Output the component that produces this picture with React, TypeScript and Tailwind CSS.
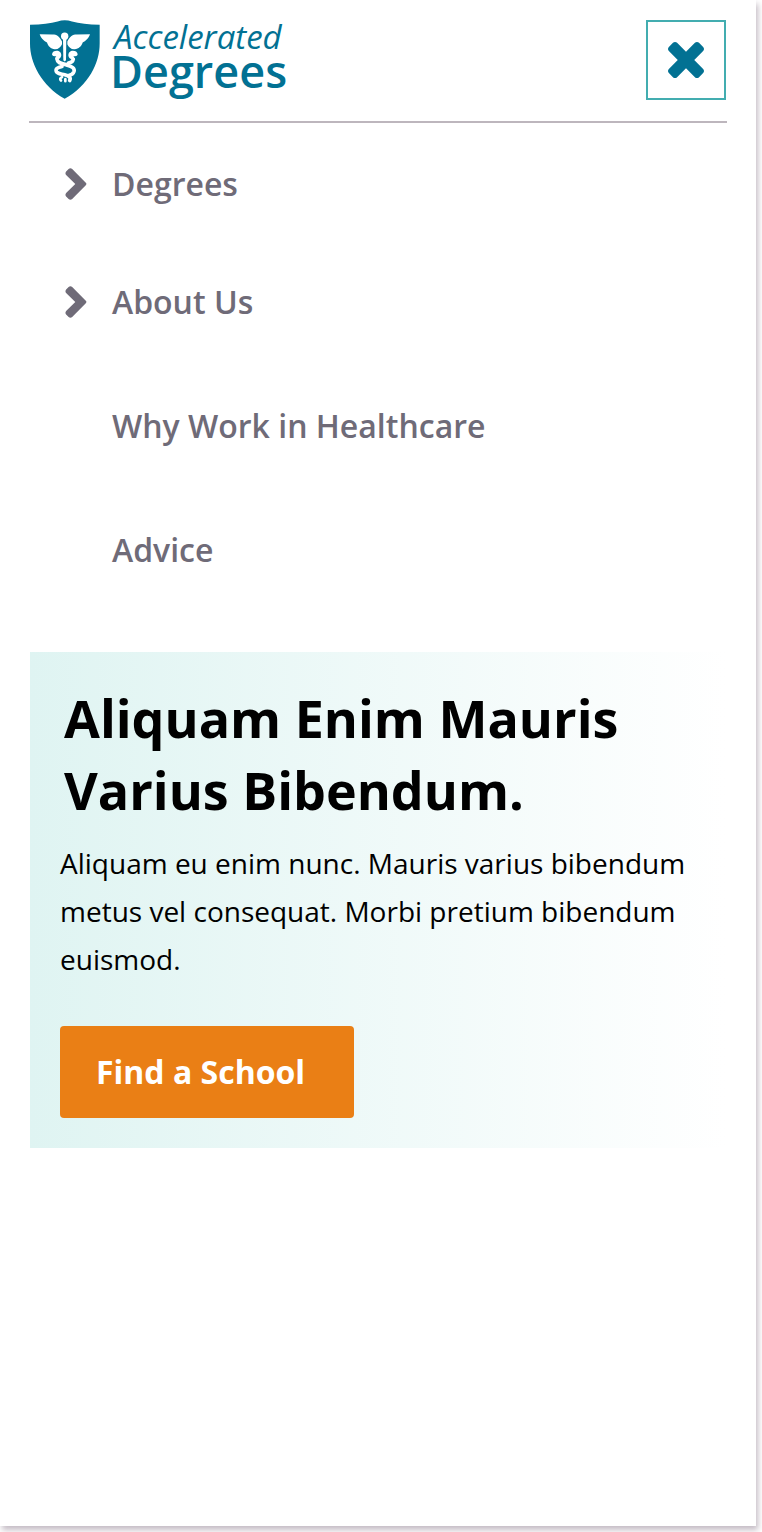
import React from "react";

function Shield() {
  return (
    <svg viewBox="30 30 210 236" className="h-[79px] w-[70px] shrink-0" aria-hidden="true">
      <path
        fill="#027193"
        d="M30 44 Q82 43 113 34 Q134 27 156 34 Q188 43 239 44 L239 100 C239 158 206 226 134 266 C64 226 30 158 30 100 Z"
      />
      <g fill="#fff">
        <circle cx="134" cy="78" r="11" />
        <path d="M129 84 H139 L138 150 L134 154 L130 150 Z" />
        <path d="M126 94 C118 78 110 73 98 73 L59 72 C64 87 75 93 81 97 C84 108 93 116 104 117 C114 118 122 111 126 102 Z" />
        <path d="M142 94 C150 78 158 73 170 73 L210 72 C205 87 194 93 188 97 C185 108 176 116 164 117 C154 118 146 111 142 102 Z" />
        <path d="M96 132 C97 123 108 120 117 123 C126 128 126 140 118 146 L108 148 C104 146 106 141 109 138 C102 138 96 137 96 132 Z" />
        <path d="M173 132 C172 123 161 120 152 123 C143 128 143 140 151 146 L161 148 C165 146 163 141 160 138 C167 138 173 137 173 132 Z" />
      </g>
      <g fill="none" stroke="#fff" strokeWidth="11" strokeLinecap="round">
        <path d="M111 147 C112 160 128 160 142 165 C156 169 165 174 162 184 C159 193 151 195 146 196" />
        <path d="M160 147 C158 156 152 158 145 159 M126 169 C112 172 106 176 109 184 C112 191 122 191 134 194 C146 197 154 202 149 211" />
        <path d="M126 201 C120 203 119 207 123 211 M136 207 V213" strokeWidth="8" />
      </g>
    </svg>
  );
}

function Chevron() {
  return (
    <svg viewBox="0 0 22 32" className="h-8 w-[22px] shrink-0" aria-hidden="true">
      <path
        fill="#6f6b78"
        d="M7.2 .9 L20.8 14.8 Q22 16 20.8 17.2 L7.2 31.1 Q5.4 32.6 3.6 31.1 L1.1 28.6 Q-.2 26.8 1.1 25 L10.3 16 L1.1 7 Q-.2 5.2 1.1 3.4 L3.6 .9 Q5.4 -.6 7.2 .9 Z"
      />
    </svg>
  );
}

export default function App() {
  return (
    <div className="flex min-h-screen overflow-hidden bg-white pr-[6px] pb-[6px] font-['Open_Sans','Noto_Sans',sans-serif]">
      <div className="flex-1 bg-white px-[30px] shadow-[2px_4px_6px_rgba(60,30,60,0.3)]">
        <header className="-mx-px flex items-start justify-between border-b-2 border-[#bdb6bd] px-px pt-5 pb-[21px]">
          <a href="#" className="flex text-[#027193]">
            <Shield />
            <span className="ml-[10px] flex flex-col">
              <span className="pl-1 text-[33px] leading-[34px] italic">Accelerated</span>
              <span className="text-[45px] leading-[34px] font-semibold">Degrees</span>
            </span>
          </a>
          <button
            type="button"
            aria-label="Close menu"
            className="flex size-20 items-center justify-center border-2 border-[#43adb0]"
          >
            <svg viewBox="110 366 1188 1188" className="size-9" aria-hidden="true">
              <path
                fill="#027193"
                d="M1298 1322q0 40-28 68l-136 136q-28 28-68 28t-68-28l-294-294-294 294q-28 28-68 28t-68-28l-136-136q-28-28-28-68t28-68l294-294-294-294q-28-28-28-68t28-68l136-136q28-28 68-28t68 28l294 294 294-294q28-28 68-28t68 28l136 136q28 28 28 68t-28 68l-294 294 294 294q28 28 28 68z"
              />
            </svg>
          </button>
        </header>

        <nav className="pt-0.5 text-[32px] leading-[44px] font-semibold text-[#6f6b78]">
          <ul>
            {["Degrees", "About Us"].map((label) => (
              <li key={label}>
                <button type="button" className="flex h-[118px] w-full items-center gap-[25px] pl-[35px] text-left">
                  <Chevron />
                  {label}
                </button>
              </li>
            ))}
          </ul>
          <ul className="pt-[3px]">
            {["Why Work in Healthcare", "Advice"].map((label) => (
              <li key={label}>
                <a href="#" className="flex h-[124px] items-center pl-[82px]">
                  {label}
                </a>
              </li>
            ))}
          </ul>
        </nav>

        <section className="mt-10 bg-[linear-gradient(to_right,#dff4f2,#ffffff)] p-[30px]">
          <h2 className="pl-1 text-[52px] leading-[72px] font-bold text-black">
            Aliquam Enim Mauris Varius Bibendum.
          </h2>
          <p className="mt-[13px] text-[28px] leading-[48px] text-black">
            Aliquam eu enim nunc. Mauris varius bibendum metus vel consequat. Morbi pretium bibendum euismod.
          </p>
          <button
            type="button"
            className="mt-[43px] flex h-[92px] w-[294px] items-center rounded-[4px] bg-[#ea7f15] pl-9 text-[32px] leading-[44px] font-bold text-white"
          >
            Find a School
          </button>
        </section>
      </div>
    </div>
  );
}
